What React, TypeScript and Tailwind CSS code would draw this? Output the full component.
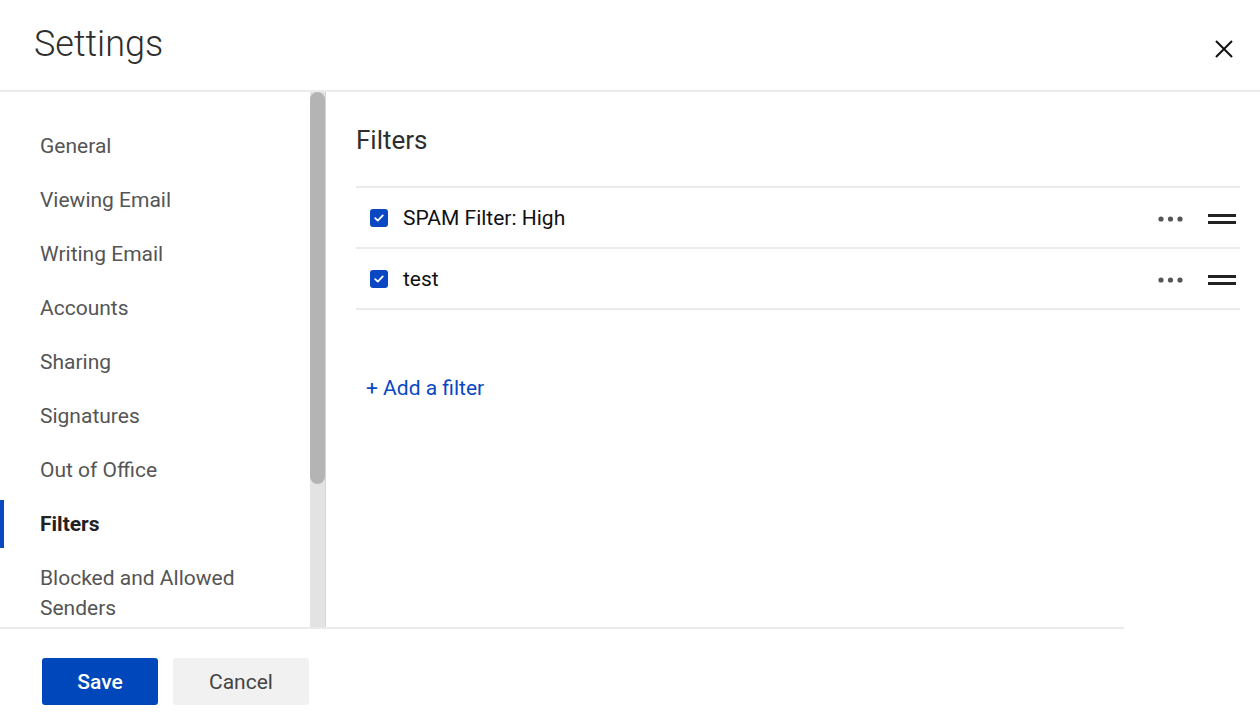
import React from 'react';

const navItems = [
  'General',
  'Viewing Email',
  'Writing Email',
  'Accounts',
  'Sharing',
  'Signatures',
  'Out of Office',
  'Filters',
  'Blocked and Allowed Senders',
];

const filters = ['SPAM Filter: High', 'test'];

function CheckIcon() {
  return (
    <span className="w-[18px] h-[18px] rounded-[3px] bg-[#0a47c2] flex items-center justify-center shrink-0">
      <svg width="12" height="12" viewBox="0 0 12 12" fill="none">
        <path d="M2.2 6.2 L4.8 8.6 L9.8 3.4" stroke="white" strokeWidth="1.8" strokeLinecap="round" strokeLinejoin="round" />
      </svg>
    </span>
  );
}

function MoreIcon() {
  return (
    <svg width="26" height="8" viewBox="0 0 26 8">
      <circle cx="3" cy="4" r="2.6" fill="#555" />
      <circle cx="12.5" cy="4" r="2.6" fill="#555" />
      <circle cx="22" cy="4" r="2.6" fill="#555" />
    </svg>
  );
}

function DragIcon() {
  return (
    <span className="flex flex-col gap-[4px] w-[28px]">
      <span className="h-[3px] bg-[#222]" />
      <span className="h-[3px] bg-[#222]" />
    </span>
  );
}

export default function App() {
  return (
    <div className="h-[716px] w-[1260px] bg-white flex flex-col overflow-hidden" style={{ fontFamily: 'Roboto, "Liberation Sans", sans-serif' }}>
      <header className="h-[92px] shrink-0 flex items-center justify-between pl-[34px] pr-[27px] border-b-2 border-[#ebebeb]">
        <h1 className="text-[36px] font-light text-[#2e2e2e] leading-none -mt-[2px]">Settings</h1>
        <button aria-label="Close" className="w-[18px] h-[18px] mt-[8px]">
          <svg width="18" height="18" viewBox="0 0 18 18">
            <path d="M1 1 L17 17 M17 1 L1 17" stroke="#111" strokeWidth="2" />
          </svg>
        </button>
      </header>
      <div className="flex-1 flex min-h-0">
        <nav className="w-[310px] shrink-0 overflow-hidden pt-[27px]">
          {navItems.map((item) => {
            const active = item === 'Filters';
            return (
              <div key={item} className="relative py-3 pl-[40px] pr-[60px]">
                {active && <span className="absolute left-0 top-[3px] bottom-[3px] w-[4px] bg-[#0a47c2]" />}
                <span className={`block text-[21px] leading-[30px] ${active ? 'font-bold text-[#222]' : 'text-[#555]'}`}>{item}</span>
              </div>
            );
          })}
        </nav>
        <div className="w-[16px] shrink-0 bg-[#e3e3e3] border-r border-[#d6d6d6] flex flex-col">
          <div className="h-[392px] bg-[#b4b4b4] rounded-[8px] w-[15px]" />
        </div>
        <main className="flex-1 pl-[30px] pr-[20px] pt-[33px]">
          <h2 className="text-[26px] text-[#2e2e2e] leading-[30px]">Filters</h2>
          <div className="mt-[31px] border-t-2 border-[#ebebeb]">
            {filters.map((f) => (
              <div key={f} className="h-[61px] flex items-center pl-[14px] border-b-2 border-[#ebebeb]">
                <CheckIcon />
                <span className="ml-[15px] mt-[2px] text-[21px] text-[#111]">{f}</span>
                <div className="ml-auto flex items-center gap-[24px] pr-[4px] mt-[2px]">
                  <MoreIcon />
                  <DragIcon />
                </div>
              </div>
            ))}
          </div>
          <button className="mt-[63px] ml-[10px] text-[21px] text-[#0a47c2]">+ Add a filter</button>
        </main>
      </div>
      <footer className="h-[89px] shrink-0 w-[1124px] border-t-2 border-[#ebebeb] pt-[29px] pl-[42px] flex items-start gap-[15px]">
        <button className="w-[116px] h-[47px] rounded-[3px] bg-[#0047bb] text-white text-[21px] font-medium pt-[2px]">Save</button>
        <button className="w-[136px] h-[47px] rounded-[3px] bg-[#f1f1f1] text-[#444] text-[21px] pt-[2px]">Cancel</button>
      </footer>
    </div>
  );
}
